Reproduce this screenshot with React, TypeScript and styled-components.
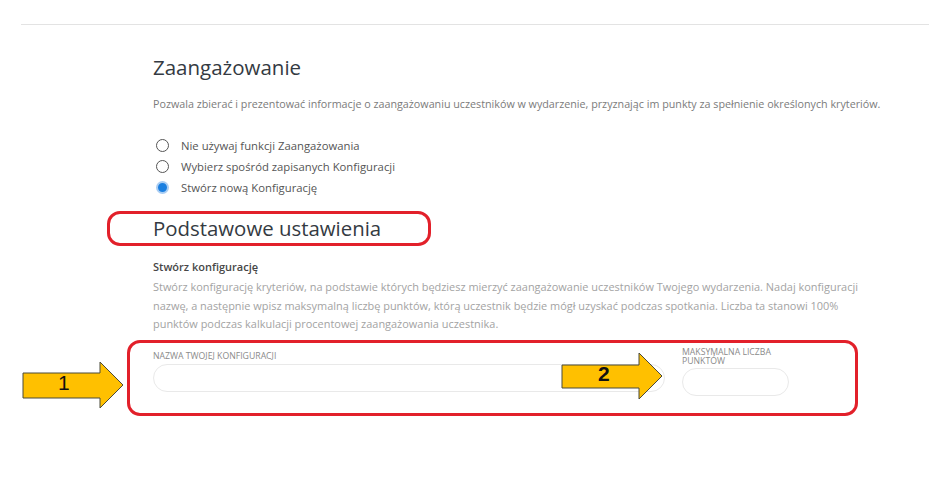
import styled, { createGlobalStyle } from "styled-components";

const GlobalStyle = createGlobalStyle`
  body {
    margin: 0;
    background: #fff;
    font-family: "Open Sans", "Liberation Sans", sans-serif;
  }
`;

const Page = styled.div`
  position: relative;
  width: 929px;
  height: 478px;
  overflow: hidden;
  background: #fff;
`;

const TopRule = styled.div`
  margin: 24px 0 0 21px;
  height: 1px;
  background: #e3e3e3;
`;

const Content = styled.div`
  padding-left: 153px;
  width: 740px;
`;

const Title = styled.h1`
  margin: 27px 0 0;
  font-size: 20.5px;
  line-height: 30px;
  font-weight: 400;
  color: #343a42;
`;

const Lead = styled.p`
  margin: 13px 0 0;
  font-size: 10.74px;
  line-height: 18px;
  white-space: nowrap;
  color: #7b7b7b;
`;

const RadioList = styled.div`
  margin-top: 22px;
  display: flex;
  flex-direction: column;
`;

const RadioRow = styled.label`
  display: flex;
  align-items: center;
  height: 21px;
  padding-left: 3px;
  gap: 12px;
  font-size: 11.3px;
  color: #555;
`;

const RadioDot = styled.span<{ checked?: boolean }>`
  box-sizing: border-box;
  width: 13px;
  height: 13px;
  border-radius: 50%;
  border: ${(p) => (p.checked ? "2px solid #a9cdf3" : "1.5px solid #555")};
  background: ${(p) => (p.checked ? "#1a7fe0" : "#fff")};
`;

const SectionTitle = styled.h2`
  margin: 15px 0 0;
  font-size: 20.4px;
  line-height: 30px;
  font-weight: 400;
  color: #343a42;
`;

const SubTitle = styled.h3`
  margin: 15px 0 0;
  font-size: 11px;
  line-height: 18px;
  font-weight: 600;
  color: #474747;
`;

const Text = styled.p`
  margin: 2px 0 0;
  font-size: 10.95px;
  line-height: 18.5px;
  color: #a3a3a3;
  width: 715px;
`;

const FormRow = styled.div`
  display: flex;
  align-items: flex-start;
  gap: 17px;
`;

const Field = styled.div<{ w: number; top: number }>`
  display: flex;
  flex-direction: column;
  width: ${(p) => p.w}px;
  margin-top: ${(p) => p.top}px;
`;

const FieldLabel = styled.span<{ lh: number }>`
  font-size: 8.7px;
  line-height: ${(p) => p.lh}px;
  text-transform: uppercase;
  color: #8a8a8a;
`;

const Input = styled.input<{ top: number }>`
  box-sizing: border-box;
  margin-top: ${(p) => p.top}px;
  height: 28px;
  border: 1px solid #e9e9e9;
  border-radius: 14px;
  background: #fff;
  outline: none;
`;

const Mark = styled.div<{ x: number; y: number; w: number; h: number }>`
  position: absolute;
  left: ${(p) => p.x}px;
  top: ${(p) => p.y}px;
  width: ${(p) => p.w}px;
  height: ${(p) => p.h}px;
  box-sizing: border-box;
  border: 3px solid #e2202a;
  border-radius: 13px;
  pointer-events: none;
`;

const ArrowBox = styled.div<{ x: number; y: number }>`
  position: absolute;
  left: ${(p) => p.x}px;
  top: ${(p) => p.y}px;
  width: 104px;
  height: 50px;
`;

const ArrowNum = styled.span<{ left: number; bold?: boolean }>`
  position: absolute;
  left: ${(p) => p.left}px;
  top: 10px;
  font-family: "Liberation Sans", Arial, sans-serif;
  font-size: 21px;
  line-height: 24px;
  font-weight: ${(p) => (p.bold ? 700 : 400)};
  color: #111;
`;

function Arrow({ x, y, label, numLeft, bold, shaft, tipY }: {
  x: number; y: number; label: string; numLeft: number; bold?: boolean;
  shaft: [number, number]; tipY: number;
}) {
  const [t, b] = shaft;
  return (
    <ArrowBox x={x} y={y}>
      <svg width="104" height="50" viewBox="0 0 104 50">
        <polygon
          points={`1,${t} 78,${t} 78,1 101,${tipY} 78,${2 * tipY - 1} 78,${b} 1,${b}`}
          fill="#ffc000"
          stroke="#4a4a3a"
          strokeWidth="1"
        />
      </svg>
      <ArrowNum left={numLeft} bold={bold}>{label}</ArrowNum>
    </ArrowBox>
  );
}

export default function App() {
  return (
    <Page>
      <GlobalStyle />
      <TopRule />
      <Content>
        <Title>Zaangażowanie</Title>
        <Lead>
          Pozwala zbierać i prezentować informacje o zaangażowaniu uczestników w wydarzenie, przyznając im punkty za spełnienie określonych kryteriów.
        </Lead>
        <RadioList>
          <RadioRow><RadioDot />Nie używaj funkcji Zaangażowania</RadioRow>
          <RadioRow><RadioDot />Wybierz spośród zapisanych Konfiguracji</RadioRow>
          <RadioRow><RadioDot checked />Stwórz nową Konfigurację</RadioRow>
        </RadioList>
        <SectionTitle>Podstawowe ustawienia</SectionTitle>
        <SubTitle>Stwórz konfigurację</SubTitle>
        <Text>
          Stwórz konfigurację kryteriów, na podstawie których będziesz mierzyć zaangażowanie uczestników Twojego wydarzenia. Nadaj konfiguracji nazwę, a następnie wpisz maksymalną liczbę punktów, którą uczestnik będzie mógł uzyskać podczas spotkania. Liczba ta stanowi 100% punktów podczas kalkulacji procentowej zaangażowania uczestnika.
        </Text>
        <FormRow>
          <Field w={512} top={17}>
            <FieldLabel lh={10}>Nazwa twojej konfiguracji</FieldLabel>
            <Input top={3} />
          </Field>
          <Field w={107} top={14.5}>
            <FieldLabel lh={9}>Maksymalna liczba punktów</FieldLabel>
            <Input top={1.5} />
          </Field>
        </FormRow>
      </Content>

      <Mark x={107} y={211} w={324} h={35} />
      <Mark x={127} y={340} w={731} h={76} />
      <Arrow x={22} y={361} label="1" numLeft={36} shaft={[12, 37]} tipY={24} />
      <Arrow x={561} y={352} label="2" numLeft={37} bold shaft={[13, 36]} tipY={24} />
    </Page>
  );
}
